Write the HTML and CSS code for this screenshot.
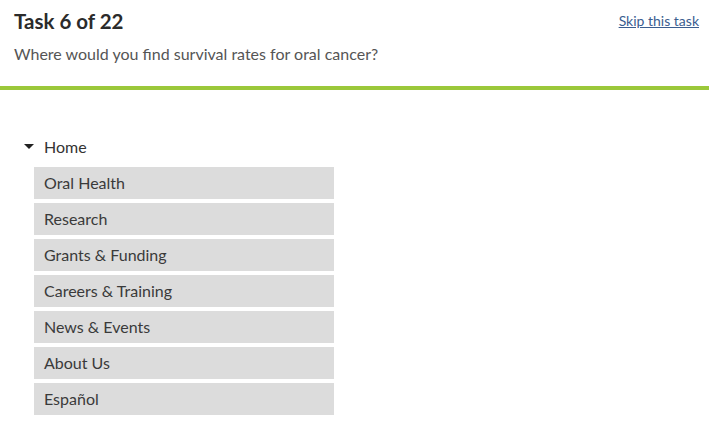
FILE: index.html
```html
<!DOCTYPE html>
<html lang="en">
<head>
  <meta charset="UTF-8">
  <title>Task 6 of 22</title>
  <meta name="viewport" content="width=device-width, initial-scale=1.0">
  <link rel="stylesheet" href="styles.css">
</head>
<body>

  <header class="task-header">
    <div class="task-top">
      <h1>Task 6 of 22</h1>
      <a href="#" class="skip-link">Skip this task</a>
    </div>
    <p class="task-question">Where would you find survival rates for oral cancer?</p>
  </header>

  <div class="tree">
    <div class="tree-root">
      <span class="caret"></span>
      <span>Home</span>
    </div>
    <ul class="tree-children">
      <li>Oral Health</li>
      <li>Research</li>
      <li>Grants &amp; Funding</li>
      <li>Careers &amp; Training</li>
      <li>News &amp; Events</li>
      <li>About Us</li>
      <li>Español</li>
    </ul>
  </div>

</body>
</html>
```

FILE: styles.css
```css
* { box-sizing: border-box; margin: 0; padding: 0; }
body { background: #fff; font-family: Lato, "Open Sans", Arial, sans-serif; color: #333; }

.task-header {
  border-bottom: 4px solid #9bc83a;
  padding: 9px 10px 0 14px;
  height: 90px;
}

.task-top {
  display: flex;
  justify-content: space-between;
  align-items: flex-start;
}

.task-top h1 {
  font-size: 20.5px;
  font-weight: bold;
  color: #2b2b2b;
  line-height: 24px;
}

.skip-link {
  font-size: 14px;
  color: #3b5d8f;
  margin-top: 3px;
}

.task-question {
  margin-top: 11px;
  font-size: 16px;
  color: #555;
}

.tree {
  padding: 46px 0 0 24px;
}

.tree-root {
  display: flex;
  align-items: center;
  font-size: 16px;
  height: 20px;
}

.caret {
  width: 0;
  height: 0;
  border-left: 5px solid transparent;
  border-right: 5px solid transparent;
  border-top: 5px solid #222;
  margin-right: 10px;
}

.tree-children {
  list-style: none;
  margin: 11px 0 0 10px;
  width: 300px;
}

.tree-children li {
  background: #dcdcdc;
  height: 32px;
  line-height: 32px;
  padding-left: 10px;
  margin-bottom: 4px;
  font-size: 16px;
  color: #3a3a3a;
}
```
